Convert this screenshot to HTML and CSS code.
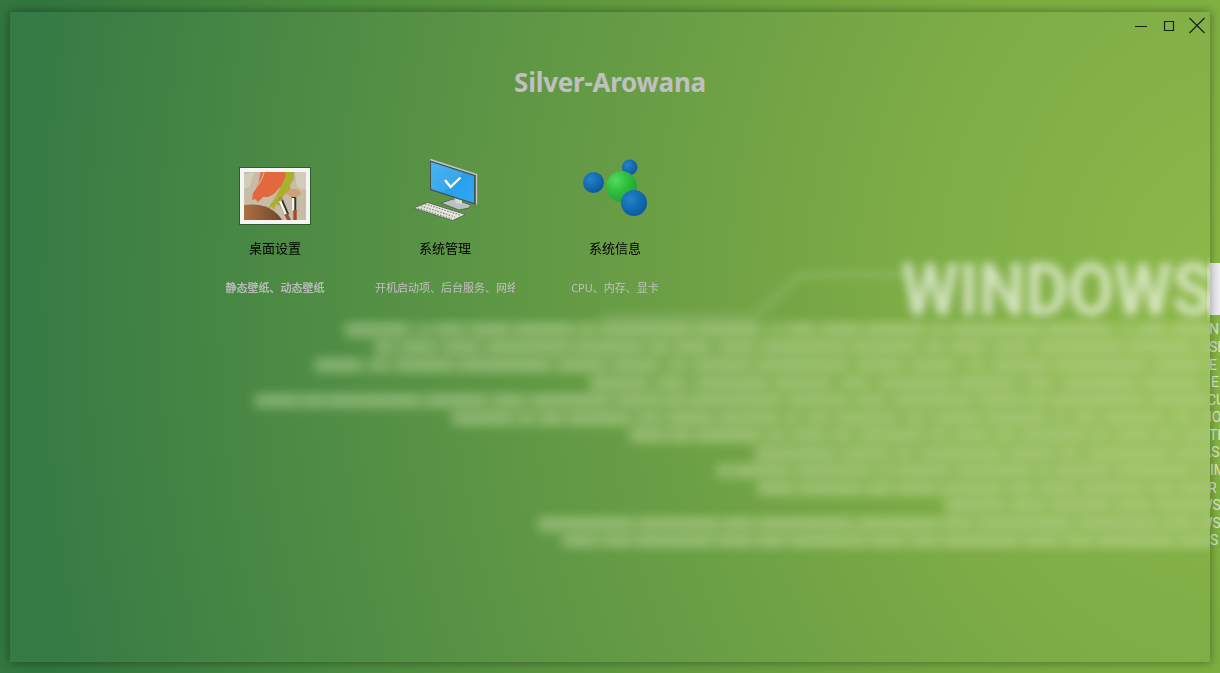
FILE: index.html
```html
<!DOCTYPE html>
<html lang="zh-CN">
<head>
<meta charset="utf-8">
<title>Silver-Arowana</title>
<link rel="stylesheet" href="styles.css">
</head>
<body class="desktop">
<svg class="wallpaper" viewBox="0 0 1220 673" aria-hidden="true">
  <g class="code">
    <rect x="1206" y="263" width="14" height="52" fill="#eeeef2"/>
    <text x="1209" y="334">N</text><text x="1209" y="352">SE</text><text x="1209" y="370">E</text>
    <text x="1211" y="387">E</text><text x="1207" y="405">CU</text><text x="1208" y="422">IO</text>
    <text x="1209" y="440">TH</text><text x="1202" y="457">AS</text><text x="1210" y="475">IM</text>
    <text x="1208" y="493">R</text><text x="1200" y="510">WS</text><text x="1200" y="528">WS</text><text x="1210" y="545">S</text>
  </g>
</svg>
<main class="window">
  <svg class="frost" viewBox="10 12 1200 650" aria-hidden="true">
    <defs>
      <filter id="soft" x="-10%" y="-20%" width="120%" height="140%"><feGaussianBlur stdDeviation="4.8"/></filter>
      <filter id="softer" filterUnits="userSpaceOnUse" x="200" y="220" width="1060" height="380"><feGaussianBlur stdDeviation="6 4.8"/></filter>
    </defs>
    <path class="haze" filter="url(#softer)" d="M345 322H1240V548H563V535H538V516H945V498H757V480H717V463H755V445H630V428H452V410H255V393H590V374H315V357H375V340H345z"/>
    <g filter="url(#softer)" class="lines">
      <path stroke-dasharray="62 15 6 9 26 8 38 6 58 8 12 8 90 5" d="M345 329H1240"/>
      <path stroke-dasharray="18 8 34 10 34 8 84 5 66 8" d="M375 347H1240"/>
      <path stroke-dasharray="44 14 14 10 56 6 90 10 46 8" d="M315 365H1240"/>
      <path stroke-dasharray="56 12 26 12 72 6" d="M590 383H1240"/>
      <path stroke-dasharray="44 4 20 4 92 7 60 8 29 9 78 7" d="M255 400H1240"/>
      <path stroke-dasharray="60 8 12 8 22 7 60 10 20 8 46 6" d="M452 418H1240"/>
      <path stroke-dasharray="34 6 20 7 64 6 18 7" d="M630 435H1240"/>
      <path stroke-dasharray="82 6 46 6 18 8" d="M755 453H1240"/>
      <path stroke-dasharray="12 5 56 6 75 6" d="M717 470H1240"/>
      <path stroke-dasharray="38 6 60 6 25 6" d="M757 488H1240"/>
      <path stroke-dasharray="60 6 34 6" d="M945 505H1240"/>
      <path stroke-dasharray="94 6 80 5 30 5" d="M538 523H1240"/>
      <path stroke-dasharray="34 6 28 5 76 5" d="M563 541H1240"/>
      <path class="trace" d="M600 317H755L800 275H905"/>
    </g>
    <text class="wordmark" x="901" y="315" textLength="312" lengthAdjust="spacingAndGlyphs" filter="url(#soft)">WINDOWS</text>
    <rect x="1209" y="263" width="14" height="53" fill="#fff" opacity=".75" filter="url(#soft)"/>
  </svg>
  <header class="titlebar">
    <svg width="75" height="24" viewBox="0 0 75 24" fill="none" stroke="#182318" stroke-width="1.2">
      <path d="M3 12.5H15M32.5 7.500h9v9h-9zM57.500 4l15 15m0-15l-15 15"/>
    </svg>
  </header>
  <h1 class="title">Silver-Arowana</h1>
  <nav class="menu">
    <section class="item">
      <svg class="icon" viewBox="235 155 80 70">
        <defs>
          <clipPath id="photo"><path d="M244 172h62v48h-62z"/></clipPath>
          <linearGradient id="wood" x2="1"><stop stop-color="#ad7140"/><stop offset="1" stop-color="#70452f"/></linearGradient>
        </defs>
        <path fill="#315c2b" d="M239 167h72v58h-72z"/><path fill="#f5f6f3" d="M240 168h70v56h-70z"/>
        <g clip-path="url(#photo)">
          <path fill="#c7bda6" d="M244 172h62v48h-62z"/>
          <path fill="#d4ccba" d="M244 174l10-2-4 14-6 3zM295 172l11 0v18l-9-3z"/>
          <path fill="#acb02b" d="M284 172h10v7l-4 6 1 6-7 4-5 11-3-2-2 6-2-3-4 1 7-10 5-10z"/>
          <path fill="#e2683f" d="M261 170h25l-1 8-4 8-7 8-6 3-5 0-5 5-3-3-3 1 1-7 5-7z"/>
          <path d="M264 172q-2 9-8 15" fill="none" stroke="#dfa384" stroke-width="1.5"/>
          <path fill="url(#wood)" d="M244 205q15-2 25 3 9 5 13 12h-38z"/>
          <path fill="#d2a076" d="M286 193q2-4 8-4 6 0 7 5l-6 4h-3z"/>
          <path fill="#b9875f" d="M279 203q-2-5 2-7l3 5z"/>
          <path stroke="#333" stroke-width="4.500" d="M281 201l6 14m7-18l0 14"/>
          <path stroke="#f5f5ed" stroke-width="2.6" d="M280 201l6 14m7-17l0 13"/>
          <path stroke="#a04b29" stroke-width="3.4" d="M286 214l4 8m5-12l0 12"/>
        </g>
      </svg>
      <h2 class="label">桌面设置</h2><p class="desc desc-strong">静态壁纸、动态壁纸</p>
    </section>
    <section class="item">
      <svg class="icon" viewBox="405 155 80 70">
        <defs><linearGradient id="screen" x1="0" y1="0" x2="1" y2="1"><stop stop-color="#4bb4ee"/><stop offset=".5" stop-color="#38a7ed"/><stop offset=".52" stop-color="#279fee"/><stop offset="1" stop-color="#32a8f2"/></linearGradient></defs>
        <path d="M441 203l12-4 18 6-2 3-10 2z" fill="#bdc1c3" stroke="#444e48" stroke-width=".7"/>
        <path d="M454 198l8 2v4l-6-1z" fill="#d5d8d8"/>
        <path d="M430 160l46 15v30l-3-1-43-14z" fill="#46515a"/>
        <path d="M430 159.500l46.500 15v30" fill="none" stroke="#c4c8c5" stroke-width="1.4"/>
        <path d="M431 162l43 14v27l-43-14z" fill="url(#screen)"/>
        <path d="M445 180l5.500 7 10-9.500" fill="none" stroke="#fff" stroke-width="2.3"/>
        <path d="M413.500 208l14-5.500 38 12-13 6z" fill="#e3e5de" stroke="#525b4f" stroke-width=".8"/>
        <path d="M421 206l34 11M425 204l35 11M418 208l34 11" fill="none" stroke="#7b817a" stroke-width="1.1" stroke-dasharray="1.5 1.4"/>
      </svg>
      <h2 class="label">系统管理</h2><p class="desc desc-long">开机启动项、后台服务、网络</p>
    </section>
    <section class="item">
      <svg class="icon" viewBox="575 155 80 70">
        <defs>
          <radialGradient id="blue" cx=".36" cy=".34" r=".65"><stop stop-color="#2385c5"/><stop offset=".45" stop-color="#1872b9"/><stop offset="1" stop-color="#0d59a4"/></radialGradient>
          <radialGradient id="green" cx=".32" cy=".3" r=".7"><stop stop-color="#58d764"/><stop offset=".5" stop-color="#30c13f"/><stop offset="1" stop-color="#24a53a"/></radialGradient>
        </defs>
        <circle cx="629.7" cy="167.3" r="7.8" fill="url(#blue)"/><circle cx="593.5" cy="182.5" r="10.5" fill="url(#blue)"/>
        <circle cx="621.5" cy="186.5" r="15.5" fill="url(#green)"/><circle cx="634" cy="203" r="13" fill="url(#blue)"/>
      </svg>
      <h2 class="label">系统信息</h2><p class="desc">CPU、内存、显卡</p>
    </section>
  </nav>
</main>
</body>
</html>
```
FILE: styles.css
```css
* { box-sizing: border-box; }
.desktop {
  position: relative;
  margin: 0;
  width: 1220px;
  height: 673px;
  padding: 12px 10px 11px;
  overflow: hidden;
  background: radial-gradient(ellipse 1220px 1500px at 1240px 292px, #8ab943 0, #7aad40 28%, #659d3f 51%, #4a8c3e 78%, #32773e 100%);
  font-family: "Noto Sans", "Noto Sans CJK SC", sans-serif;
}
.wallpaper { position: absolute; inset: 0; width: 1220px; height: 673px; }
.code { font: 14px Roboto, sans-serif; fill: #dce8cf; }
.window {
  position: relative;
  display: flex;
  flex-direction: column;
  width: 1200px;
  height: 650px;
  overflow: hidden;
  background: radial-gradient(ellipse 1220px 1500px at 1230px 280px, #8eb94a 0, #7dac46 28%, #689d45 51%, #4d8b44 78%, #367a45 100%);
  box-shadow: 0 0 9px 1px rgba(0, 0, 0, .34);
}
.frost { position: absolute; inset: 0; width: 1200px; height: 650px; }
.haze { fill: #d0e69c; opacity: .2; }
.lines { fill: none; stroke: #dceac8; stroke-width: 13px; opacity: .22; }
.trace { stroke-width: 7px; opacity: .8; }
.wordmark { font: bold 73px Roboto, sans-serif; fill: #fff; opacity: .66; }
.titlebar, .title, .menu { position: relative; }
.titlebar { display: flex; justify-content: flex-end; height: 49px; padding: 2px 3px 0 0; }
.title { margin: 0; height: 42px; text-align: center; color: #c0c0c0; font: bold 26px/42px "Noto Sans", sans-serif; letter-spacing: -.25px; }
.menu { display: flex; gap: 30px; padding: 52px 0 0 195px; }
.item { display: flex; flex-direction: column; align-items: center; width: 140px; }
.icon { width: 80px; height: 70px; }
.label { margin: 13px 0 0; height: 20px; color: #000; font: 13px/20px "Noto Sans CJK SC", sans-serif; }
.desc { width: 140px; margin: 21px 0 0; overflow: hidden; white-space: nowrap; text-align: center; color: #c0c0c0; font: 11px/18px "Noto Sans", "Noto Sans CJK SC", sans-serif; }
.desc-strong { -webkit-text-stroke: .25px #c0c0c0; }
.desc-long { text-align: left; }
```
